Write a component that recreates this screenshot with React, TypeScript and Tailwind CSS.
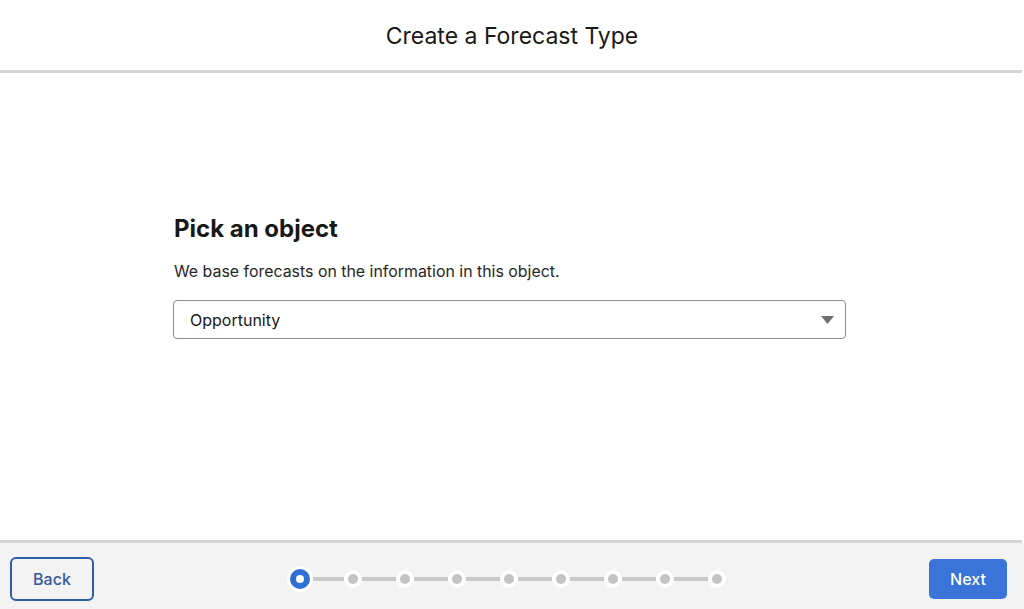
import React from "react";

export default function App() {
  const steps = 9;
  return (
    <div className="w-[1024px] h-[609px] bg-white flex flex-col overflow-hidden" style={{ fontFamily: "Inter, 'Liberation Sans', sans-serif" }}>
      <div className="h-[70px] flex items-center justify-center shrink-0">
        <h1 className="text-[23px] text-[#181818] mt-[2px]">Create a Forecast Type</h1>
      </div>
      <div className="h-[3px] bg-[#d4d4d4] mr-[2px] shrink-0" />
      <div className="flex-1 flex flex-col pl-[174px] pr-[178px] pt-[141px]">
        <h2 className="text-[24px] font-bold text-[#181818] leading-[30px]">Pick an object</h2>
        <p className="text-[15.9px] text-[#262626] mt-[18px] leading-[20px]">We base forecasts on the information in this object.</p>
        <div className="mt-[18px] -ml-[1px] h-[39px] border border-[#8e8e8e] rounded-[4px] flex items-center justify-between pl-[16px] pr-[11px]">
          <span className="text-[16px] text-[#181818]">Opportunity</span>
          <svg width="13" height="8" viewBox="0 0 13 8"><path d="M0 0 H13 L6.5 8 Z" fill="#707070" /></svg>
        </div>
      </div>
      <div className="h-[3px] bg-[#d4d4d4] mr-[2px] shrink-0" />
      <div className="h-[66px] bg-[#f3f3f3] shrink-0 flex items-center justify-between pl-[10px] pr-[17px] pt-[6px]">
        <button className="w-[84px] h-[44px] border-2 border-[#2f5da6] rounded-[6px] bg-[#f3f3f3] text-[16px] text-[#35599a] font-medium">Back</button>
        <div className="flex items-center ml-[-10px]">
          {Array.from({ length: steps }).map((_, i) => (
            <React.Fragment key={i}>
              {i === 0 ? (
                <div className="w-[26px] h-[26px] rounded-full bg-white flex items-center justify-center">
                  <div className="w-[20px] h-[20px] rounded-full border-[6px] border-[#2f6fd6] bg-white" />
                </div>
              ) : (
                <div className="w-[18px] h-[18px] rounded-full bg-white flex items-center justify-center">
                  <div className="w-[10px] h-[10px] rounded-full bg-[#c4c4c4]" />
                </div>
              )}
              {i < steps - 1 && <div className={i === 0 ? "w-[31px] h-[4px] bg-[#c9c9c9]" : "w-[34px] h-[4px] bg-[#c9c9c9]"} />}
            </React.Fragment>
          ))}
        </div>
        <button className="w-[78px] h-[40px] rounded-[5px] bg-[#3a74d8] text-white text-[16px] font-medium">Next</button>
      </div>
    </div>
  );
}
